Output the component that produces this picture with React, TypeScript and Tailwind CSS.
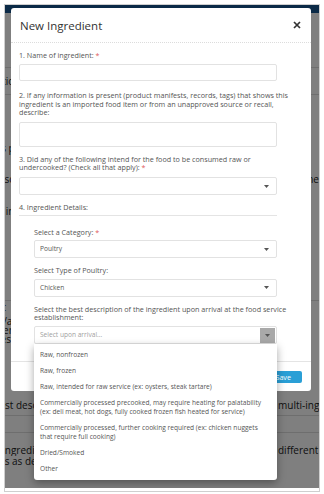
import React from "react";

function Caret() {
  return (
    <svg width="5" height="3" viewBox="0 0 5 3" className="shrink-0">
      <path d="M0 0h5L2.5 3z" fill="#555" />
    </svg>
  );
}

function SelectBox({ value, placeholder, boxed }: { value?: string; placeholder?: string; boxed?: boolean }) {
  return (
    <div className="h-[18px] border border-[#e2e2e2] rounded-[2px] bg-white flex items-center pl-[5px] pr-[1px] text-[6.6px]">
      <span className={value ? "flex-1 text-[#555]" : "flex-1 text-[#a0a0a0]"}>{value ?? placeholder ?? ""}</span>
      {boxed ? (
        <div className="w-[15px] h-[15px] bg-[#a9a9a9] flex items-center justify-center">
          <Caret />
        </div>
      ) : (
        <div className="w-[15px] flex items-center justify-center pr-[2px]">
          <Caret />
        </div>
      )}
    </div>
  );
}

const options: React.ReactNode[] = [
  "Raw, nonfrozen",
  "Raw, frozen",
  "Raw, intended for raw service (ex: oysters, steak tartare)",
  <>Commercially processed precooked, may require heating for palatability<br />(ex: deli meat, hot dogs, fully cooked frozen fish heated for service)</>,
  <>Commercially processed, further cooking required (ex: chicken nuggets<br />that require full cooking)</>,
  "Dried/Smoked",
  "Other",
];

function Req() {
  return <span className="text-[#e05a5a]"> *</span>;
}

export default function App() {
  return (
    <div className="w-[324px] h-[494px] bg-white pt-[4px] pl-[4px]" style={{ fontFamily: "'Open Sans', 'Liberation Sans', sans-serif" }}>
      <div className="w-[316px] h-[488px] border border-[#cfcfcf] bg-white">
        <div className="relative h-[483px] overflow-hidden bg-white text-[10px] text-[#222]">
          {/* page behind the dialog */}
          <div className="h-[8px] bg-[#17548f]" />
          <div className="flex flex-col -ml-[8px] whitespace-nowrap">
            <div className="h-[55px] border-b border-[#ddd]" />
            <div className="h-[27px] border-b border-[#ddd] flex items-center">
              <span className="ml-[-30px]">Description</span>
            </div>
            <div className="h-[44px]" />
            <div className="h-[18px] flex items-center">
              <span className="ml-[-2px]">us products</span>
            </div>
            <div className="h-[44px] flex items-center justify-between">
              <span>c source</span>
              <span className="mr-[-4px]">Other</span>
            </div>
            <div className="h-[20px] flex items-center">n intake</div>
            <div className="h-[80px] border-b border-[#ddd]" />
            <div className="h-[12px] flex items-center">
              <span className="ml-[-16px]">Topic</span>
            </div>
            <div className="h-[34px] flex flex-col justify-center leading-[9px]">
              <span>n/a</span>
              <span>pending</span>
              <span>tested</span>
            </div>
            <div className="h-[49px]" />
            <div className="h-[20px] flex items-center border-b border-[#ddd]">
              <div className="w-[281px] shrink-0 overflow-hidden">
                <span className="ml-[-4px] block">Best description of the ingredient upon arrival</span>
              </div>
              <span>multi-ingredient</span>
            </div>
            <div className="h-[17px] border-b border-[#ddd]" />
            <div className="pt-[12px] leading-[11px] flex flex-col">
              <div className="flex">
                <div className="w-[281px] shrink-0 overflow-hidden">
                  <span className="ml-[5px] block">Ingredients used in the recipe</span>
                </div>
                <span>different from</span>
              </div>
              <span className="ml-[-10px]">Uses as described</span>
            </div>
          </div>

          <div className="absolute inset-0 bg-black/50" />

          {/* dialog */}
          <div className="absolute top-[3px] left-[6px] w-[300px] bg-white rounded-[3px] text-[7.2px] text-[#555]">
            <div className="h-[35px] border-b border-dotted border-[#dcdcdc] flex items-center justify-between pl-[9px] pr-[10px]">
              <span className="text-[11.5px] text-[#333] pt-[1px]">New Ingredient</span>
              <svg width="8" height="8" viewBox="0 0 8 8">
                <path d="M1 1l6 6M7 1L1 7" stroke="#333" strokeWidth="1.7" />
              </svg>
            </div>

            <div className="flex flex-col pl-[8px] pr-[34px] pt-[8px] pb-[17px] leading-[8.25px]">
              <div>1. Name of ingredient:<Req /></div>
              <div className="mt-[5px] h-[17px] border border-[#e2e2e2] rounded-[2px]" />

              <div className="mt-[10px] whitespace-nowrap">
                2. If any information is present (product manifests, records, tags) that shows this<br />
                ingredient is an imported food item or from an unapproved source or recall,<br />
                describe:
              </div>
              <div className="mt-[6px] h-[25px] border border-[#e2e2e2] rounded-[2px]" />

              <div className="mt-[7.5px] whitespace-nowrap">
                3. Did any of the following intend for the food to be consumed raw or<br />
                undercooked? (Check all that apply):<Req />
              </div>
              <div className="mt-[6px]">
                <SelectBox />
              </div>

              <div className="mt-[8px] pb-[3.5px] border-b border-[#e4e4e4]">4. Ingredient Details:</div>

              <div className="pl-[15px] flex flex-col">
                <div className="mt-[12px]">Select a Category:<Req /></div>
                <div className="mt-[4px]">
                  <SelectBox value="Poultry" />
                </div>
                <div className="mt-[8px]">Select Type of Poultry:</div>
                <div className="mt-[4.5px]">
                  <SelectBox value="Chicken" />
                </div>
                <div className="mt-[8px] whitespace-nowrap">
                  Select the best description of the ingredient upon arrival at the food service<br />
                  establishment:
                </div>
                <div className="mt-[5px] relative">
                  <SelectBox placeholder="Select upon arrival..." boxed />
                  <div className="absolute left-0 right-0 top-full z-10 bg-white rounded-b-[3px] shadow-[0_3px_8px_rgba(0,0,0,0.35)] pt-[2.5px] pb-[2.5px] text-[6.6px]">
                    {options.map((o, i) => (
                      <div key={i} className="px-[6px] py-[3.4px] leading-[9.2px] whitespace-nowrap">
                        {o}
                      </div>
                    ))}
                  </div>
                </div>
              </div>
            </div>

            <div className="border-t border-[#e4e4e4] flex justify-end pt-[9px] pb-[8px] pr-[9px]">
              <button className="h-[11.5px] px-[11px] bg-[#2a9fd6] text-white rounded-[2px] text-[7.2px] leading-[11px]">Save</button>
            </div>
          </div>
        </div>
      </div>
    </div>
  );
}
